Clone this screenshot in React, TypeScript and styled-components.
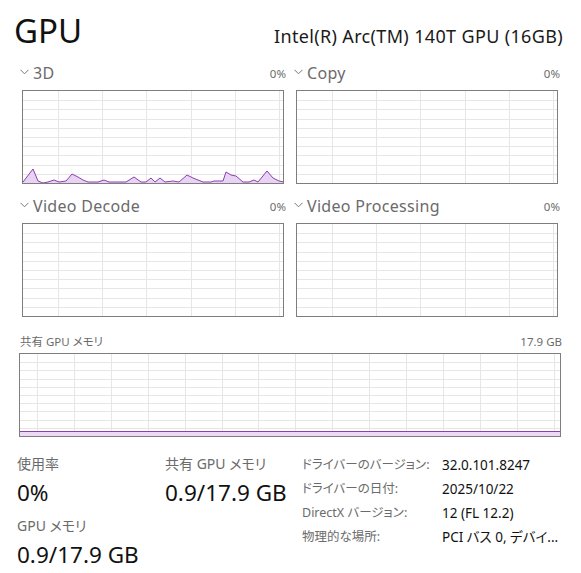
import React from "react";
import styled, { createGlobalStyle } from "styled-components";

const GlobalStyle = createGlobalStyle`
  html, body {
    margin: 0;
    padding: 0;
    background: #ffffff;
  }
  body {
    font-family: "Noto Sans", "Noto Sans CJK JP", sans-serif;
    font-feature-settings: "palt";
    color: #1a1a1a;
  }
`;

const GRAPH_W = 262;
const GRAPH_H = 94;

// usage samples for the 3D engine: [x, height above baseline]
const usage3d: [number, number][] = [
  [0, 1], [10, 14], [15, 2], [20, 0], [25, 1], [31, 3], [36, 1], [43, 2],
  [49, 9], [55, 6], [60, 3], [65, 1], [75, 1], [81, 3], [86, 1], [93, 1],
  [103, 1], [111, 6], [118, 1], [123, 1], [128, 5], [132, 1], [137, 5],
  [142, 1], [150, 2], [156, 1], [164, 8], [170, 5], [175, 3], [180, 1],
  [188, 1], [191, 2], [200, 2], [203, 11], [208, 8], [213, 7], [220, 1],
  [226, 1], [231, 3], [235, 1], [244, 12], [250, 5], [256, 2], [261, 1],
];

function Chevron() {
  return (
    <svg width="9" height="6" viewBox="0 0 9 6">
      <polyline points="0.5,0.8 4.5,4.8 8.5,0.8" fill="none" stroke="#777" strokeWidth="1" />
    </svg>
  );
}

type GraphProps = {
  width: number;
  height: number;
  rows: number;
  colStart: number;
  colStep: number;
  line?: [number, number][];
};

function Graph({ width, height, rows, colStart, colStep, line }: GraphProps) {
  const iw = width - 2;
  const ih = height - 2;
  const hLines = [];
  for (let i = 1; i < rows; i++) {
    const y = Math.round((ih * i) / rows) + 0.5;
    hLines.push(<line key={"h" + i} x1={0} x2={iw} y1={y} y2={y} />);
  }
  const vLines = [];
  for (let x = colStart; x < iw; x += colStep) {
    vLines.push(<line key={"v" + x} x1={Math.round(x) + 0.5} x2={Math.round(x) + 0.5} y1={0} y2={ih} />);
  }
  let path = "";
  let area = "";
  if (line) {
    const pts = line.map(([x, h]) => `${x},${ih - h}`);
    path = "M" + pts.join(" L");
    area = `M0,${ih} L` + pts.join(" L") + ` L${line[line.length - 1][0]},${ih} Z`;
  }
  return (
    <GraphBox $w={width} $h={height}>
      <svg width={iw} height={ih} viewBox={`0 0 ${iw} ${ih}`}>
        <g stroke="#e6e6e6" strokeWidth="1">
          {hLines}
          {vLines}
        </g>
        {line && (
          <>
            <path d={area} fill="#e9d3f5" />
            <path d={path} fill="none" stroke="#8e3fb0" strokeWidth="1" />
          </>
        )}
      </svg>
    </GraphBox>
  );
}

function EngineCard({ name, data }: { name: string; data?: [number, number][] }) {
  return (
    <Card>
      <CardHead>
        <CardName>
          <Chevron />
          <span>{name}</span>
        </CardName>
        <Small>0%</Small>
      </CardHead>
      <Graph width={GRAPH_W} height={GRAPH_H} rows={10} colStart={35} colStep={44.2} line={data} />
    </Card>
  );
}

export default function App() {
  return (
    <>
      <GlobalStyle />
      <Page>
        <Header>
          <Title>GPU</Title>
          <Model>Intel(R) Arc(TM) 140T GPU (16GB)</Model>
        </Header>

        <Engines>
          <EngineCard name="3D" data={usage3d} />
          <EngineCard name="Copy" />
          <EngineCard name="Video Decode" />
          <EngineCard name="Video Processing" />
        </Engines>

        <Shared>
          <SharedHead>
            <span>共有 GPU メモリ</span>
            <span>17.9 GB</span>
          </SharedHead>
          <SharedGraph>
            <Graph width={542} height={84} rows={10} colStart={17} colStep={36.9} />
            <MemFill />
          </SharedGraph>
        </Shared>

        <Stats>
          <StatCol>
            <Stat>
              <StatLabel>使用率</StatLabel>
              <StatValue>0%</StatValue>
            </Stat>
            <Stat>
              <StatLabel>GPU メモリ</StatLabel>
              <StatValue>0.9/17.9 GB</StatValue>
            </Stat>
          </StatCol>
          <StatCol>
            <Stat>
              <StatLabel>共有 GPU メモリ</StatLabel>
              <StatValue>0.9/17.9 GB</StatValue>
            </Stat>
          </StatCol>
          <Info>
            <InfoKey>ドライバーのバージョン:</InfoKey>
            <InfoVal>32.0.101.8247</InfoVal>
            <InfoKey>ドライバーの日付:</InfoKey>
            <InfoVal>2025/10/22</InfoVal>
            <InfoKey>DirectX バージョン:</InfoKey>
            <InfoVal>12 (FL 12.2)</InfoVal>
            <InfoKey>物理的な場所:</InfoKey>
            <InfoVal>PCI バス 0, デバイ...</InfoVal>
          </Info>
        </Stats>
      </Page>
    </>
  );
}

const Page = styled.div`
  width: 581px;
  min-height: 573px;
  box-sizing: border-box;
  padding: 10px 18px 0 14px;
`;

const Header = styled.div`
  display: flex;
  justify-content: space-between;
  align-items: baseline;
  height: 46px;
`;

const Title = styled.div`
  font-size: 33px;
  line-height: 42px;
  color: #111;
`;

const Model = styled.div`
  font-size: 18px;
  letter-spacing: 0.35px;
  color: #1a1a1a;
`;

const Engines = styled.div`
  display: grid;
  grid-template-columns: ${GRAPH_W}px ${GRAPH_W}px;
  column-gap: 12px;
  row-gap: 13px;
  padding-left: 8px;
  margin-top: 8px;
`;

const Card = styled.div`
  display: flex;
  flex-direction: column;
  gap: 8px;
`;

const CardHead = styled.div`
  display: flex;
  justify-content: space-between;
  align-items: center;
  height: 18px;
  margin: 0 -2px;
`;

const CardName = styled.div`
  display: flex;
  align-items: center;
  gap: 4px;
  font-size: 16px;
  letter-spacing: 0.3px;
  color: #6b6b6b;

  svg {
    margin-top: -3px;
  }
`;

const Small = styled.span`
  font-size: 11.5px;
  color: #6b6b6b;
`;

const GraphBox = styled.div<{ $w: number; $h: number }>`
  width: ${(p) => p.$w}px;
  height: ${(p) => p.$h}px;
  box-sizing: border-box;
  border: 1px solid #7e7e7e;
  background: #fff;

  svg {
    display: block;
  }
`;

const Shared = styled.div`
  margin-top: 16px;
  padding-left: 5px;
  width: 542px;
`;

const SharedHead = styled.div`
  display: flex;
  justify-content: space-between;
  font-size: 11.5px;
  color: #6b6b6b;
  height: 18px;
  line-height: 18px;
  margin: 0 -1px 2px 1px;
`;

const SharedGraph = styled.div`
  position: relative;
`;

const MemFill = styled.div`
  position: absolute;
  left: 1px;
  right: 1px;
  bottom: 1px;
  height: 4px;
  background: #ecdaf5;
  border-top: 1.5px solid #8e3fb0;
`;

const Stats = styled.div`
  display: grid;
  grid-template-columns: 148px 137px auto;
  margin-top: 17px;
  padding-left: 3px;
`;

const StatCol = styled.div`
  display: flex;
  flex-direction: column;
  gap: 9px;
`;

const Stat = styled.div`
  display: flex;
  flex-direction: column;
  gap: 5px;
`;

const StatLabel = styled.div`
  font-size: 14px;
  line-height: 20px;
  color: #6b6b6b;
`;

const StatValue = styled.div`
  font-size: 22.5px;
  line-height: 28px;
  color: #111;
`;

const Info = styled.div`
  display: grid;
  grid-template-columns: 140px auto;
  grid-auto-rows: 24px;
  font-size: 13.5px;
  line-height: 24px;
  margin-top: -1px;
`;

const InfoKey = styled.div`
  color: #6b6b6b;
  font-size: 12.5px;
  white-space: nowrap;
`;

const InfoVal = styled.div`
  color: #111;
  white-space: nowrap;
`;
